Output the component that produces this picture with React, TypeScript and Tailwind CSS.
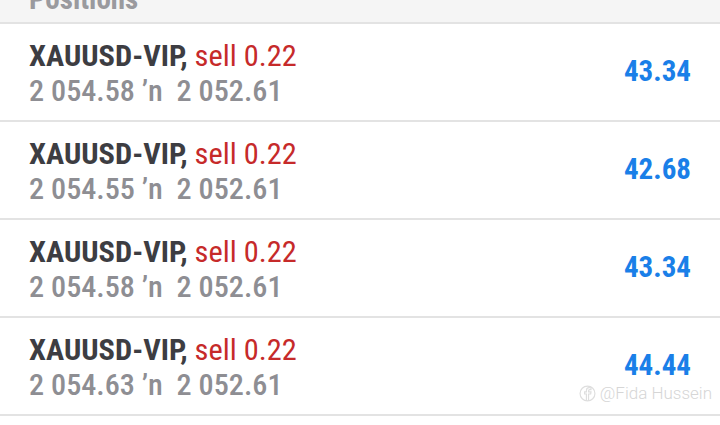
const rows = [
  { open: "2 054.58", close: "2 052.61", profit: "43.34" },
  { open: "2 054.55", close: "2 052.61", profit: "42.68" },
  { open: "2 054.58", close: "2 052.61", profit: "43.34" },
  { open: "2 054.63", close: "2 052.61", profit: "44.44" },
];

export default function App() {
  return (
    <div
      className="w-[720px] h-[425px] overflow-hidden bg-white"
      style={{ fontFamily: "Roboto, 'Noto Sans', sans-serif" }}
    >
      <div className="h-[24px] bg-[#f5f5f5] border-b-2 border-[#e3e3e3] relative overflow-hidden">
        <div className="absolute left-[29px] top-[-22px] text-[29px] font-bold text-[#9a9a9e] font-stretch-condensed">
          Positions
        </div>
      </div>
      {rows.map((r, i) => (
        <div
          key={i}
          className="relative h-[98px] flex items-center justify-between pl-[29px] pr-[29px] border-b-2 border-[#e3e3e3]"
        >
          <div className="flex flex-col font-stretch-condensed leading-[35px] pt-[2px]">
            <div className="text-[30.4px] whitespace-nowrap">
              <span className="font-bold text-[#3d3d42]">XAUUSD-VIP,</span>
              <span className="text-[#c62a2a]"> sell 0.22</span>
            </div>
            <div className="text-[30.2px] font-medium text-[#8e8e93] whitespace-nowrap">
              {r.open} ’n&nbsp; {r.close}
            </div>
          </div>
          <div className="text-[29px] font-bold text-[#1a7fe8] font-stretch-condensed">
            {r.profit}
          </div>
          {i === 3 && (
            <div className="absolute right-[8px] top-[63px] flex items-center gap-[4px] text-[17px] font-light text-[#d6d6d6] whitespace-nowrap">
              <svg width="17" height="17" viewBox="0 0 16 16" fill="none" stroke="#dedede" strokeWidth="1.1">
                <circle cx="8" cy="8" r="7" />
                <path d="M9 15V8.5h2l.3-2H9V5.3c0-.6.2-1 1-1h1.3V2.6c-.3 0-1-.1-1.7-.1-1.6 0-2.6 1-2.6 2.7v1.3H5.3v2H7V15" />
              </svg>
              @Fida Hussein
            </div>
          )}
        </div>
      ))}
    </div>
  );
}
